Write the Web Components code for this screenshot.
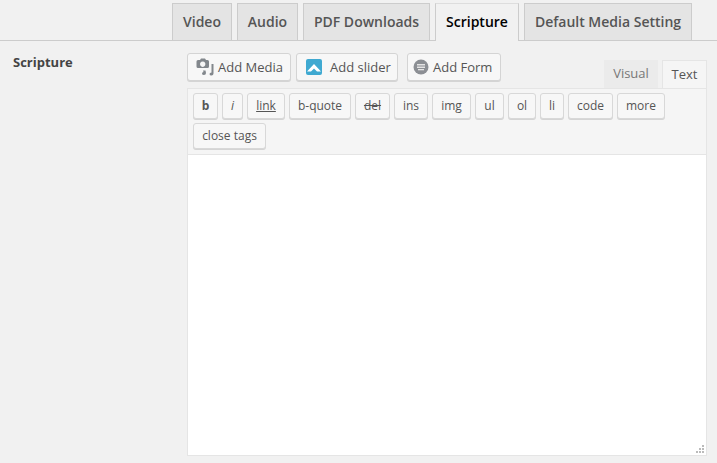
<!DOCTYPE html>
<html>
<head>
<meta charset="utf-8">
<style>
  html, body { margin: 0; height: 100%; background: #f1f1f1; }
  body { font-family: 'Open Sans', sans-serif; color: #444; overflow: hidden; }
</style>
</head>
<body>
<settings-page>
  <tab-bar slot="tabs">
    <nav-tab style="--w:60px">Video</nav-tab>
    <nav-tab style="--w:61px">Audio</nav-tab>
    <nav-tab style="--w:127px">PDF Downloads</nav-tab>
    <nav-tab style="--w:84px;margin-right:-1px" active>Scripture</nav-tab>
    <nav-tab style="--w:168px;margin-left:1px">Default Media Setting</nav-tab>
  </tab-bar>
  <span slot="label">Scripture</span>
  <text-editor slot="field">
    <media-button slot="media" style="--w:104px;--mr:5px;--pl:7px;--gap:3px">
      <svg slot="icon" width="20" height="18" viewBox="0 0 20 18">
        <path fill="#82878c" d="M3 2h2l1-1.500h4l1 1.500h1.500q1.500 0 1.500 1.500v5q0 1.500-1.500 1.500h-9.500q-1.500 0-1.500-1.500v-5q0-1.500 1.500-1.500zM7.700 3.500a2.700 2.700 0 1 0 .01 0z"/>
        <path fill="#82878c" d="M16.500 6h2v9.500q0 2-2 2t-2-1.500q0-1.500 2-1.500zM8 12.500h2.500l.5 2.500q0 2-2 2t-2-1.500q0-1.500 1.500-1.500z"/>
      </svg>
      Add Media
    </media-button>
    <media-button slot="media" style="--w:102px;--mr:9px;--pl:8px;--gap:7px">
      <svg slot="icon" width="18" height="18" viewBox="0 0 18 18">
        <rect x="1" y="1" width="16" height="16" rx="2" fill="#3fa9d1"/>
        <path fill="#fff" d="M2 13.500 9 6l7 7.500h-4L9 10.500 6 13.500z"/>
      </svg>
      Add slider
    </media-button>
    <media-button slot="media" style="--w:94px;--mr:0;--pl:5px;--gap:4px">
      <svg slot="icon" width="16" height="16" viewBox="0 0 16 16">
        <circle cx="8" cy="8" r="7.500" fill="#8c8f94"/>
        <rect x="4" y="5" width="8" height="1.500" fill="#e4e4e4"/>
        <rect x="4" y="7.500" width="8" height="1.500" fill="#e4e4e4"/>
        <rect x="5" y="10" width="6" height="1.300" fill="#e4e4e4"/>
      </svg>
      Add Form
    </media-button>
    <mode-tab slot="modes" style="--w:54px">Visual</mode-tab>
    <mode-tab slot="modes" style="--w:45px" active>Text</mode-tab>
    <quick-button slot="tags" style="--w:25px;font-weight:700">b</quick-button>
    <quick-button slot="tags" style="--w:21px;font-style:italic">i</quick-button>
    <quick-button slot="tags" style="--w:38px;text-decoration:underline">link</quick-button>
    <quick-button slot="tags" style="--w:62px">b-quote</quick-button>
    <quick-button slot="tags" style="--w:35px;text-decoration:line-through">del</quick-button>
    <quick-button slot="tags" style="--w:34px">ins</quick-button>
    <quick-button slot="tags" style="--w:39px">img</quick-button>
    <quick-button slot="tags" style="--w:29px">ul</quick-button>
    <quick-button slot="tags" style="--w:28px">ol</quick-button>
    <quick-button slot="tags" style="--w:24px">li</quick-button>
    <quick-button slot="tags" style="--w:45px">code</quick-button>
    <quick-button slot="tags" style="--w:48px">more</quick-button>
    <quick-button slot="tags" style="--w:73px">close tags</quick-button>
  </text-editor>
</settings-page>

<script>
class SettingsPage extends HTMLElement {
  constructor() {
    super();
    this.attachShadow({ mode: 'open' }).innerHTML = `
      <style>
        :host { display: block; }
        .row { display: flex; padding: 12px 10px 0 13px; }
        .label { width: 174px; font-size: 13px; font-weight: 700; line-height: 18px; color: #444; }
        .field { width: 520px; }
      </style>
      <slot name="tabs"></slot>
      <div class="row">
        <div class="label"><slot name="label"></slot></div>
        <div class="field"><slot name="field"></slot></div>
      </div>`;
  }
}

class TabBar extends HTMLElement {
  constructor() {
    super();
    this.attachShadow({ mode: 'open' }).innerHTML = `
      <style>
        :host {
          display: flex; gap: 5px; height: 37px; margin-top: 3px; padding-left: 172px;
          border-bottom: 1px solid #ccc; align-items: flex-start;
        }
      </style>
      <slot></slot>`;
  }
}

class NavTab extends HTMLElement {
  constructor() {
    super();
    this.attachShadow({ mode: 'open' }).innerHTML = `
      <style>
        :host {
          display: block; box-sizing: border-box; width: var(--w); height: 37px;
          border: 1px solid #ccc; border-bottom: 0; background: #e4e4e4;
          color: #555; font-size: 14px; font-weight: 600; line-height: 36px; text-align: center;
        }
        :host([active]) { background: #f1f1f1; color: #000; height: 38px; border-color: #ddd #ccc; }
      </style>
      <slot></slot>`;
  }
}

class MediaButton extends HTMLElement {
  constructor() {
    super();
    this.attachShadow({ mode: 'open' }).innerHTML = `
      <style>
        :host {
          display: flex; box-sizing: border-box; width: var(--w); height: 28px; margin-right: var(--mr);
          padding-left: var(--pl); align-items: center; gap: var(--gap);
          border: 1px solid #d4d4d4; border-radius: 3px; background: #f7f7f7;
          box-shadow: 0 1px 0 #d4d4d4; color: #555; font-size: 13px; white-space: nowrap;
        }
        ::slotted(svg) { flex: none; }
      </style>
      <slot name="icon"></slot><slot></slot>`;
  }
}

class ModeTab extends HTMLElement {
  constructor() {
    super();
    this.attachShadow({ mode: 'open' }).innerHTML = `
      <style>
        :host {
          display: block; box-sizing: border-box; width: var(--w); height: 28px;
          background: #ebebeb; color: #777; font-size: 13px; line-height: 27px; text-align: center;
        }
        :host([active]) { background: #f5f5f5; color: #555; border: 1px solid #e5e5e5; border-bottom: 0; }
      </style>
      <slot></slot>`;
  }
}

class QuickButton extends HTMLElement {
  constructor() {
    super();
    this.attachShadow({ mode: 'open' }).innerHTML = `
      <style>
        :host {
          display: block; box-sizing: border-box; width: var(--w); height: 26px;
          border: 1px solid #d8d8d8; border-radius: 3px; background: #f7f7f7;
          box-shadow: 0 1px 0 #d4d4d4; color: #555; font-size: 12px; line-height: 24px;
          text-align: center; white-space: nowrap;
        }
      </style>
      <slot></slot>`;
  }
}

class TextEditor extends HTMLElement {
  constructor() {
    super();
    this.attachShadow({ mode: 'open' }).innerHTML = `
      <style>
        :host { display: block; }
        .top { display: flex; height: 35px; align-items: flex-start; }
        .media { display: flex; }
        .modes { display: flex; gap: 4px; margin-left: auto; padding-top: 7px; }
        .box { border: 1px solid #e5e5e5; }
        .tags {
          display: flex; flex-wrap: wrap; gap: 4px; height: 55px;
          padding: 4px 5px 6px; background: #f5f5f5; border-bottom: 1px solid #e5e5e5;
          align-content: flex-start;
        }
        .area { position: relative; height: 300px; background: #fff; }
        svg { position: absolute; right: 1px; bottom: 1px; }
      </style>
      <div class="top">
        <div class="media"><slot name="media"></slot></div>
        <div class="modes"><slot name="modes"></slot></div>
      </div>
      <div class="box">
        <div class="tags"><slot name="tags"></slot></div>
        <div class="area">
          <svg width="9" height="9" viewBox="0 0 9 9" fill="#bbb">
            <rect x="6" y="0" width="2" height="2"/><rect x="3" y="3" width="2" height="2"/>
            <rect x="6" y="3" width="2" height="2"/><rect x="0" y="6" width="2" height="2"/>
            <rect x="3" y="6" width="2" height="2"/><rect x="6" y="6" width="2" height="2"/>
          </svg>
        </div>
      </div>`;
  }
}

customElements.define('settings-page', SettingsPage);
customElements.define('tab-bar', TabBar);
customElements.define('nav-tab', NavTab);
customElements.define('media-button', MediaButton);
customElements.define('mode-tab', ModeTab);
customElements.define('quick-button', QuickButton);
customElements.define('text-editor', TextEditor);
</script>
</body>
</html>
